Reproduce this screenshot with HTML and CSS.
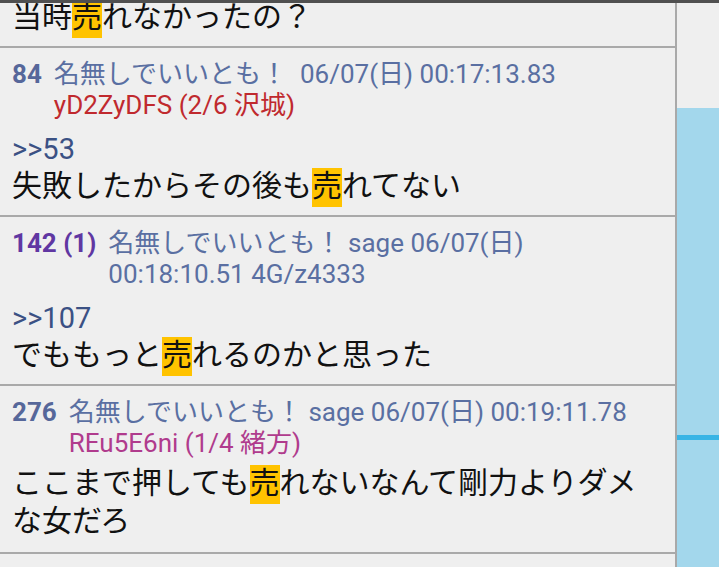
FILE: index.html
```html
<!DOCTYPE html>
<html lang="ja">
<head>
<meta charset="utf-8">
<title>スレッド</title>
<link rel="stylesheet" href="styles.css">
</head>
<body>
<div class="screen">
  <div class="topbar"></div>
  <div class="main">
    <div class="list">
      <article class="post post--cut">
        <p class="body">当時<mark class="hit">売</mark>れなかったの？</p>
      </article>

      <article class="post">
        <header class="meta">
          <span class="num">84</span>
          <div class="info">
            <div class="info-line">名無しでいいとも！&nbsp; 06/07(日) 00:17:13.83</div>
            <div class="info-line id-red">yD2ZyDFS (2/6 沢城)</div>
          </div>
        </header>
        <div class="anchor">&gt;&gt;53</div>
        <p class="body">失敗したからその後も<mark class="hit">売</mark>れてない</p>
      </article>

      <article class="post">
        <header class="meta">
          <span class="num num--purple">142 (1)</span>
          <div class="info">
            <div class="info-line">名無しでいいとも！ sage 06/07(日)</div>
            <div class="info-line">00:18:10.51 4G/z4333</div>
          </div>
        </header>
        <div class="anchor">&gt;&gt;107</div>
        <p class="body">でももっと<mark class="hit">売</mark>れるのかと思った</p>
      </article>

      <article class="post post--last">
        <header class="meta">
          <span class="num">276</span>
          <div class="info">
            <div class="info-line">名無しでいいとも！ sage 06/07(日) 00:19:11.78</div>
            <div class="info-line id-magenta">REu5E6ni (1/4 緒方)</div>
          </div>
        </header>
        <p class="body">ここまで押しても<mark class="hit">売</mark>れないなんて剛力よりダメな女だろ</p>
      </article>
    </div>
    <div class="divider"></div>
    <div class="rail">
      <div class="rail-top"></div>
      <div class="rail-track">
        <div class="rail-mark"></div>
      </div>
    </div>
  </div>
</div>
</body>
</html>
```

FILE: styles.css
```css
* {
  box-sizing: border-box;
}

html, body {
  margin: 0;
  padding: 0;
  background: #efefef;
}

.screen {
  width: 719px;
  height: 567px;
  display: flex;
  flex-direction: column;
  overflow: hidden;
  background: #efefef;
  font-family: Roboto, "Noto Sans CJK JP", sans-serif;
}

.topbar {
  height: 3px;
  flex: 0 0 3px;
  background: #505050;
  position: relative;
  z-index: 2;
}

.main {
  flex: 1;
  min-height: 0;
  display: flex;
}

.list {
  width: 675px;
  flex: 0 0 675px;
  overflow: hidden;
}

.divider {
  width: 2px;
  flex: 0 0 2px;
  background: #a9a9a9;
}

.rail {
  flex: 1;
  display: flex;
  flex-direction: column;
}

.rail-top {
  height: 105px;
  flex: 0 0 105px;
  background: #efefef;
}

.rail-track {
  flex: 1;
  background: #a3d7ec;
  padding-top: 327px;
}

.rail-mark {
  height: 5px;
  background: #38b4e5;
}

.post {
  padding: 13px 20px 13px 12px;
  border-bottom: 2px solid #a9a9a9;
}

.post--cut {
  margin-top: -8px;
  padding-top: 0;
}

.post--last {
  padding-bottom: 15px;
}

.meta {
  display: flex;
  align-items: baseline;
  gap: 12px;
}

.num {
  font-size: 26px;
  line-height: 27px;
  font-weight: 700;
  color: #56679a;
  white-space: nowrap;
}

.num--purple {
  color: #6037a2;
}

.info {
  flex: 1;
  min-width: 0;
}

.info-line {
  height: 29px;
  font-size: 26px;
  line-height: 27px;
  color: #5a6fa2;
  white-space: nowrap;
}

.info-line:first-child {
  height: 31px;
}

.id-red {
  color: #c0292e;
}

.id-magenta {
  color: #b03b8d;
}

.anchor {
  margin-top: 13px;
  font-size: 29px;
  line-height: 30px;
  color: #3b5184;
}

.body {
  margin: 0;
  font-family: "Noto Sans CJK JP", Roboto, sans-serif;
  font-size: 30px;
  line-height: 38px;
  color: #111111;
}

.meta + .body {
  margin-top: 2px;
}

.hit {
  display: inline-block;
  background: #ffc300;
  color: #111111;
  line-height: 30px;
  padding-bottom: 9px;
  margin-bottom: -5px;
}
```
